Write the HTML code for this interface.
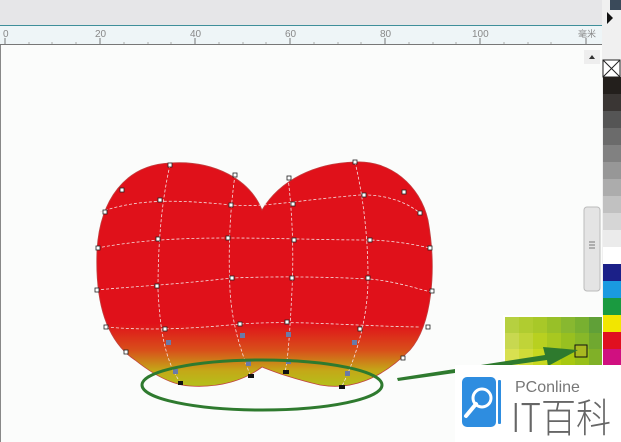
<!DOCTYPE html>
<html><head><meta charset="utf-8"><style>
html,body{margin:0;padding:0;width:621px;height:442px;overflow:hidden;background:#fbfcfb;font-family:"Liberation Sans","Noto Sans CJK SC",sans-serif}
</style></head><body>
<svg width="621" height="442" viewBox="0 0 621 442" xmlns="http://www.w3.org/2000/svg" style="position:absolute;left:0;top:0">
<defs>
<linearGradient id="g" x1="0" y1="0" x2="0" y2="1" gradientUnits="objectBoundingBox">
<stop offset="0" stop-color="#e0111a"/><stop offset="0.72" stop-color="#e0111a"/>
<stop offset="0.84" stop-color="#d8501a"/><stop offset="0.93" stop-color="#c4a818"/><stop offset="1" stop-color="#b4c01a"/>
</linearGradient>
</defs>
<rect x="0" y="0" width="602" height="25" fill="#e6e6e8"/>
<rect x="0" y="25" width="602" height="1" fill="#3f8f9a"/>
<rect x="0" y="26" width="602" height="18" fill="#eef5f7"/>
<rect x="0" y="44" width="602" height="1" fill="#777"/>
<rect x="0" y="45" width="1" height="397" fill="#888"/>
<g font-size="10" fill="#888">
<text x="3" y="37">0</text><text x="95" y="37">20</text><text x="190" y="37">40</text><text x="285" y="37">60</text><text x="380" y="37">80</text><text x="472" y="37">100</text><text x="578" y="37" font-size="9">毫米</text>
</g>
<g stroke="#777" stroke-width="1">
<path d="M5,38V44M100,38V44M195,38V44M290,38V44M385,38V44M480,38V44M586,38V44"/>
</g>
<g stroke="#aaa" stroke-width="1">
<path d="M29,42V44M52,42V44M76,42V44M124,42V44M148,42V44M171,42V44M219,42V44M243,42V44M266,42V44M314,42V44M338,42V44M361,42V44M409,42V44M433,42V44M456,42V44M504,42V44M528,42V44M551,42V44"/>
</g>
<rect x="584" y="50" width="16" height="14" fill="#eee"/>
<path d="M589,59l3,-4 3,4z" fill="#333"/>
<rect x="584" y="207" width="16" height="84" rx="3" fill="#e4e4e4" stroke="#bbb"/>
<path d="M589,242h6M589,245h6M589,248h6" stroke="#777"/>
<rect x="602" y="0" width="19" height="442" fill="#f0f0f0"/>
<rect x="610" y="0" width="11" height="10" fill="#3a4a5a"/>
<path d="M607,12l6,6 -6,6z" fill="#111"/>
<rect x="603" y="60" width="17" height="17" fill="#fff" stroke="#222"/>
<path d="M603,60L620,77M620,60L603,77" stroke="#222"/>
<g>
<rect x="603" y="77" width="18" height="17" fill="#231f1c"/>
<rect x="603" y="94" width="18" height="17" fill="#3a3634"/>
<rect x="603" y="111" width="18" height="17" fill="#555"/>
<rect x="603" y="128" width="18" height="17" fill="#6b6b6b"/>
<rect x="603" y="145" width="18" height="17" fill="#818181"/>
<rect x="603" y="162" width="18" height="17" fill="#979797"/>
<rect x="603" y="179" width="18" height="17" fill="#acacac"/>
<rect x="603" y="196" width="18" height="17" fill="#c1c1c1"/>
<rect x="603" y="213" width="18" height="17" fill="#d6d6d6"/>
<rect x="603" y="230" width="18" height="17" fill="#ebebeb"/>
<rect x="603" y="247" width="18" height="17" fill="#fff"/>
<rect x="603" y="264" width="18" height="17" fill="#1b2088"/>
<rect x="603" y="281" width="18" height="17" fill="#1a9ae0"/>
<rect x="603" y="298" width="18" height="17" fill="#1a9a40"/>
<rect x="603" y="315" width="18" height="17" fill="#f2e600"/>
<rect x="603" y="332" width="18" height="17" fill="#e01020"/>
<rect x="603" y="349" width="18" height="17" fill="#d01080"/>
</g>
<g>
<rect x="503" y="315" width="100" height="52" fill="#fff"/>
<rect x="505" y="317" width="14" height="16" fill="#b6d040"/><rect x="519" y="317" width="14" height="16" fill="#b0cc30"/><rect x="533" y="317" width="14" height="16" fill="#a8c828"/><rect x="547" y="317" width="14" height="16" fill="#98c028"/><rect x="561" y="317" width="14" height="16" fill="#88b830"/><rect x="575" y="317" width="14" height="16" fill="#78b030"/><rect x="589" y="317" width="13" height="16" fill="#60a038"/>
<rect x="505" y="333" width="14" height="16" fill="#c8d850"/><rect x="519" y="333" width="14" height="16" fill="#c0d438"/><rect x="533" y="333" width="14" height="16" fill="#b8d020"/><rect x="547" y="333" width="14" height="16" fill="#a8c820"/><rect x="561" y="333" width="14" height="16" fill="#98c020"/><rect x="575" y="333" width="14" height="16" fill="#88b828"/><rect x="589" y="333" width="13" height="16" fill="#70a830"/>
<rect x="505" y="349" width="14" height="16" fill="#d8e050"/><rect x="519" y="349" width="14" height="16" fill="#d0dc38"/><rect x="533" y="349" width="14" height="16" fill="#c8d820"/><rect x="547" y="349" width="14" height="16" fill="#b8d010"/><rect x="561" y="349" width="14" height="16" fill="#a8c810"/><rect x="575" y="349" width="14" height="16" fill="#98c018"/><rect x="589" y="349" width="13" height="16" fill="#80b028"/>
</g>
<rect x="575" y="345" width="12" height="12" fill="#a8b820" stroke="#111"/>
<path d="M262,210 C250,180 215,160 170,163 C125,165 100,200 97,250 C95,300 105,340 135,360 C150,372 170,385 190,386 C220,388 245,380 262,367 C275,372 290,378 320,385 C360,392 390,370 410,350 C432,325 437,270 428,220 C420,185 390,160 355,162 C315,163 280,180 262,210 Z" fill="url(#g)" stroke="#c04040" stroke-width="0.8"/>
<g fill="none" stroke="#f5e0e0" stroke-width="0.8" stroke-dasharray="3,2">
<path d="M100,212 C140,198 180,200 232,205 C260,208 300,200 360,195 C390,194 410,205 420,213"/>
<path d="M97,248 C140,240 180,238 228,238 C280,238 320,240 370,240 C400,241 420,246 430,248"/>
<path d="M96,290 C140,286 170,285 232,278 C280,276 330,277 370,279 C400,282 420,290 432,292"/>
<path d="M106,327 C140,330 180,330 240,324 C300,320 350,326 420,327"/>
<path d="M170,165 C162,200 158,240 158,290 C160,330 165,360 180,382"/>
<path d="M235,175 C230,210 228,250 230,290 C232,330 245,360 250,375"/>
<path d="M288,178 C292,210 294,250 292,290 C290,330 288,360 285,372"/>
<path d="M355,162 C364,200 368,240 368,278 C368,320 355,360 342,386"/>
</g>
<g fill="#fff" stroke="#222" stroke-width="0.8">
<rect x="168" y="163" width="4" height="4"/><rect x="233" y="173" width="4" height="4"/><rect x="287" y="176" width="4" height="4"/><rect x="353" y="160" width="4" height="4"/>
<rect x="120" y="188" width="4" height="4"/><rect x="103" y="210" width="4" height="4"/><rect x="96" y="246" width="4" height="4"/><rect x="95" y="288" width="4" height="4"/><rect x="104" y="325" width="4" height="4"/><rect x="124" y="350" width="4" height="4"/>
<rect x="401" y="356" width="4" height="4"/><rect x="426" y="325" width="4" height="4"/><rect x="430" y="289" width="4" height="4"/><rect x="428" y="246" width="4" height="4"/><rect x="418" y="211" width="4" height="4"/><rect x="402" y="190" width="4" height="4"/>
<rect x="158" y="198" width="4" height="4"/><rect x="229" y="203" width="4" height="4"/><rect x="291" y="202" width="4" height="4"/><rect x="362" y="193" width="4" height="4"/>
<rect x="156" y="237" width="4" height="4"/><rect x="226" y="236" width="4" height="4"/><rect x="292" y="238" width="4" height="4"/><rect x="368" y="238" width="4" height="4"/>
<rect x="155" y="284" width="4" height="4"/><rect x="230" y="276" width="4" height="4"/><rect x="290" y="276" width="4" height="4"/><rect x="366" y="276" width="4" height="4"/>
<rect x="163" y="327" width="4" height="4"/><rect x="238" y="322" width="4" height="4"/><rect x="285" y="320" width="4" height="4"/><rect x="358" y="327" width="4" height="4"/>
</g>
<g fill="#6a7aa8">
<rect x="166" y="340" width="5" height="5"/><rect x="240" y="333" width="5" height="5"/><rect x="286" y="332" width="5" height="5"/><rect x="352" y="340" width="5" height="5"/>
<rect x="173" y="369" width="5" height="5"/><rect x="246" y="361" width="5" height="5"/><rect x="286" y="359" width="5" height="5"/><rect x="345" y="371" width="5" height="5"/>
</g>
<g fill="#111"><rect x="178" y="381" width="5" height="4"/><rect x="248" y="374" width="6" height="4"/><rect x="283" y="370" width="6" height="4"/><rect x="339" y="385" width="6" height="4"/></g>
<ellipse cx="262" cy="385" rx="120" ry="25" fill="none" stroke="#2e7a2e" stroke-width="3"/>
<path d="M397,378 L545,355 L543,347 L578,350 L548,366 L547,360 L398,381 Z" fill="#2e7a2e"/>
<rect x="455" y="365" width="166" height="77" fill="#fff"/>
<rect x="462" y="377" width="34" height="50" rx="5" fill="#2e8de0"/>
<rect x="498" y="380" width="3" height="44" rx="1" fill="#2e8de0"/>
<circle cx="482" cy="398" r="9" fill="none" stroke="#fff" stroke-width="3"/>
<path d="M476,404 L466,416" stroke="#fff" stroke-width="4" stroke-linecap="round"/>
<text x="515" y="392" font-size="16" fill="#777">PConline</text>
<text x="511" y="432" font-size="40" fill="#666" font-family="'Noto Sans CJK SC',sans-serif" font-weight="300" textLength="100" lengthAdjust="spacingAndGlyphs">IT百科</text>
</svg>
</body></html>
